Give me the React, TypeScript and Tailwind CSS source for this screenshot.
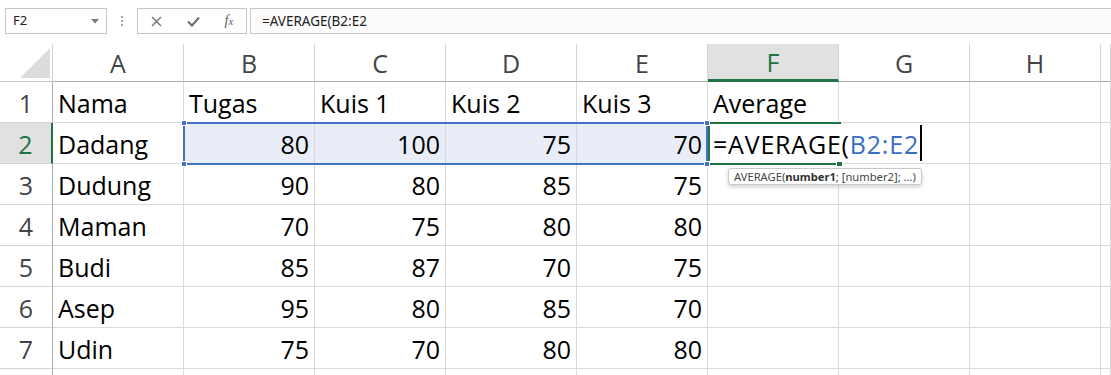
import React from "react";

const FONT = { fontFamily: '"Open Sans", "Noto Sans", sans-serif' };
const UI = { fontFamily: '"Noto Sans", "Open Sans", sans-serif' };

const cols = ["A", "B", "C", "D", "E", "F", "G", "H", ""];
const data: (string | number)[][] = [
  ["Nama", "Tugas", "Kuis 1", "Kuis 2", "Kuis 3", "Average"],
  ["Dadang", 80, 100, 75, 70],
  ["Dudung", 90, 80, 85, 75],
  ["Maman", 70, 75, 80, 80],
  ["Budi", 85, 87, 70, 75],
  ["Asep", 95, 80, 85, 70],
  ["Udin", 75, 70, 80, 80],
  [],
];

function TopBar() {
  return (
    <div className="flex items-start h-[44px] pt-[8px] bg-white" style={UI}>
      <div className="ml-[5px] w-[102px] h-[26px] border border-[#c6c6c6] bg-white flex items-center justify-between pl-[7px] pr-[7px]">
        <span className="text-[13px] text-[#222]">F2</span>
        <svg width="8" height="5" viewBox="0 0 8 5">
          <path d="M0 0 L8 0 L4 4.5 Z" fill="#7a7a7a" />
        </svg>
      </div>
      <div className="w-[30px] h-[26px] flex flex-col items-center justify-center gap-[2px]">
        <span className="w-[2px] h-[2px] bg-[#a6a6a6]" />
        <span className="w-[2px] h-[2px] bg-[#a6a6a6]" />
        <span className="w-[2px] h-[2px] bg-[#a6a6a6]" />
      </div>
      <div className="w-[110px] h-[26px] border border-[#c6c6c6] bg-white flex items-center">
        <div className="w-[37px] flex justify-center">
          <svg width="11" height="11" viewBox="0 0 11 11">
            <path d="M1 1 L10 10 M10 1 L1 10" stroke="#707070" strokeWidth="1.4" />
          </svg>
        </div>
        <div className="w-[37px] flex justify-center">
          <svg width="13" height="11" viewBox="0 0 13 11">
            <path d="M1 5.5 L5 9.5 L12 1.5" stroke="#707070" strokeWidth="2.2" fill="none" />
          </svg>
        </div>
        <div className="w-[34px] flex justify-center">
          <span
            className="italic text-[14px] text-[#606060] leading-none"
            style={{ fontFamily: '"Liberation Serif", "DejaVu Serif", serif' }}
          >
            f<span className="text-[11px]">x</span>
          </span>
        </div>
      </div>
      <div className="ml-[3px] flex-1 h-[26px] border-y border-l border-[#c6c6c6] bg-[#fcfcfc] flex items-center pl-[11px]">
        <span className="text-[13.5px] text-[#222]">=AVERAGE(B2:E2</span>
      </div>
    </div>
  );
}

function Sheet() {
  const lineLight = "border-[#d9d9d9]";
  return (
    <div className="relative" style={FONT}>
      <div className="grid grid-cols-[53px_repeat(8,131px)_1fr] grid-rows-[38px_repeat(8,41px)]">
        {/* corner */}
        <div className="relative border-r border-b border-r-[#d4d4d4] border-b-[#c8c8c8] bg-white">
          <svg className="absolute left-[20px] top-[4px]" width="30" height="30" viewBox="0 0 30 30">
            <path d="M30 0 L30 30 L0 30 Z" fill="#dcdcdc" />
          </svg>
        </div>
        {cols.map((c, i) =>
          c === "F" ? (
            <div
              key={i}
              className="flex items-end justify-center pb-[4px] bg-[#e1e1e1] border-r border-[#d4d4d4] border-b-[3px] border-b-[#217346] text-[25px] leading-none text-[#217346]"
            >
              {c}
            </div>
          ) : (
            <div
              key={i}
              className="flex items-end justify-center pb-[5px] bg-white border-r border-r-[#d4d4d4] border-b border-b-[#ababab] text-[25px] leading-none text-[#444]"
            >
              {c}
            </div>
          )
        )}
        {data.map((row, r) => (
          <React.Fragment key={r}>
            {r === 1 ? (
              <div className="flex items-end justify-center pb-[6px] bg-[#e1e1e1] border-r-2 border-r-[#217346] border-b border-b-[#d4d4d4] text-[25px] leading-none text-[#217346]">
                {r + 1}
              </div>
            ) : (
              <div className="flex items-end justify-center pb-[6px] bg-white border-r border-r-[#ababab] border-b border-b-[#d4d4d4] text-[25px] leading-none text-[#444]">
                {r < 7 ? r + 1 : ""}
              </div>
            )}
            {Array.from({ length: 9 }).map((_, c) => {
              const v = row[c];
              const sel = r === 1 && c >= 1 && c <= 4;
              if (r === 1 && c === 5) {
                return (
                  <div
                    key={c}
                    className={`relative z-10 flex items-end pb-[6px] pl-[5px] border-b ${lineLight} text-[25px] leading-none whitespace-nowrap overflow-visible bg-white tracking-[0.8px]`}
                  >
                    <span className="shrink-0 text-black">=AVERAGE(</span>
                    <span className="shrink-0 text-[#3a6ec4]">B2:E2</span>
                    <span className="shrink-0 block w-[2px] h-[36px] bg-black ml-[1px] mb-[-4px]" />
                  </div>
                );
              }
              return (
                <div
                  key={c}
                  className={`flex items-end pb-[6px] border-r border-b ${lineLight} text-[25px] leading-none text-black whitespace-nowrap ${
                    typeof v === "number" ? "justify-end pr-[5px]" : "justify-start pl-[5px]"
                  } ${sel ? "bg-[#e8edf7]" : "bg-white"}`}
                >
                  {v}
                </div>
              );
            })}
          </React.Fragment>
        ))}
      </div>

      {/* blue range selection B2:E2 */}
      <div className="absolute left-[183px] top-[78px] w-[525px] h-[43px] border-2 border-[#4472c4] pointer-events-none z-20" />
      <div className="absolute left-[181px] top-[76px] w-[6px] h-[6px] bg-[#4472c4] border border-white z-30" />
      <div className="absolute left-[181px] top-[117px] w-[6px] h-[6px] bg-[#4472c4] border border-white z-30" />
      <div className="absolute left-[704px] top-[76px] w-[6px] h-[6px] bg-[#4472c4] border border-white z-30" />
      <div className="absolute left-[704px] top-[117px] w-[6px] h-[6px] bg-[#4472c4] border border-white z-30" />

      {/* active cell F2 */}
      <div className="absolute left-[708px] top-[78px] w-[133px] h-[43px] border-2 border-r-0 border-[#217346] pointer-events-none z-20" />
      <div className="absolute left-[836px] top-[117px] w-[7px] h-[6px] bg-[#217346] border border-white z-30" />

      {/* tooltip */}
      <div
        className="absolute left-[728px] top-[124px] h-[17px] px-[5px] flex items-center rounded-[3px] border border-[#c8c8c8] bg-white shadow-[0_2px_4px_rgba(0,0,0,0.18)] z-30 text-[11.2px] leading-none text-[#444] whitespace-nowrap"
        style={UI}
      >
        AVERAGE(<b className="font-bold text-[#333]">number1</b>; [number2]; ...)
      </div>
    </div>
  );
}

export default function App() {
  return (
    <div className="w-[1111px] h-[375px] overflow-hidden bg-white">
      <TopBar />
      <Sheet />
    </div>
  );
}
